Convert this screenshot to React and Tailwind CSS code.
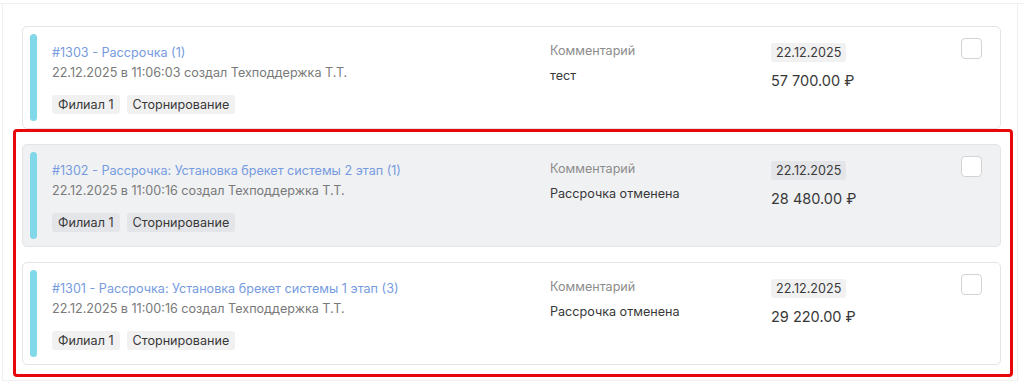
import React from 'react';

const rows = [
  {
    id: 1303,
    title: 'Рассрочка (1)',
    created: '22.12.2025 в 11:06:03 создал Техподдержка Т.Т.',
    comment: 'тест',
    date: '22.12.2025',
    amount: '57 700.00 ₽',
    active: false,
  },
  {
    id: 1302,
    title: 'Рассрочка: Установка брекет системы 2 этап (1)',
    created: '22.12.2025 в 11:00:16 создал Техподдержка Т.Т.',
    comment: 'Рассрочка отменена',
    date: '22.12.2025',
    amount: '28 480.00 ₽',
    active: true,
  },
  {
    id: 1301,
    title: 'Рассрочка: Установка брекет системы 1 этап (3)',
    created: '22.12.2025 в 11:00:16 создал Техподдержка Т.Т.',
    comment: 'Рассрочка отменена',
    date: '22.12.2025',
    amount: '29 220.00 ₽',
    active: false,
  },
];

const PaymentCard = ({ row }) => {
  const chip = row.active ? 'bg-[#e4e5e8]' : 'bg-[#f1f1f2]';
  return (
    <div
      className={`flex h-[103px] p-[7px] rounded-[5px] border ${
        row.active ? 'bg-[#f0f1f3] border-[#e3e4e6]' : 'bg-white border-[#e4e4e6]'
      }`}
    >
      {/* status strip */}
      <div className="w-[7px] shrink-0 rounded-full bg-[#80d8e8]" />

      <div className="flex-1 min-w-0 ml-[15px] pt-[9px]">
        <div className="text-[12.6px] leading-[19px] text-[#769be0]">
          #{row.id} - {row.title}
        </div>
        <div className="mt-[1px] text-[12.6px] leading-[19px] text-[#797979]">{row.created}</div>
        <div className="flex gap-[7px] mt-[13px]">
          <span className={`h-[19px] px-[6px] rounded-[3px] text-[12.6px] leading-[19px] text-[#383838] ${chip}`}>
            Филиал 1
          </span>
          <span className={`h-[19px] px-[6px] rounded-[3px] text-[12.6px] leading-[19px] text-[#383838] ${chip}`}>
            Сторнирование
          </span>
        </div>
      </div>

      <div className="w-[221px] shrink-0 pt-[7px]">
        <div className="text-[12.6px] leading-[19px] text-[#8c8c8c]">Комментарий</div>
        <div className="mt-[6px] text-[12.6px] leading-[19px] text-[#383838]">{row.comment}</div>
      </div>

      <div className="w-[190px] shrink-0 pt-[9px]">
        <span className={`inline-block h-[19px] px-[5px] rounded-[3px] text-[12.6px] leading-[19px] text-[#3a3a3a] align-top ${chip}`}>
          {row.date}
        </span>
        <div className="mt-[4px] text-[14.5px] leading-[20px] text-[#383838]">{row.amount}</div>
      </div>

      <div className="w-[21px] shrink-0 mr-[11px] pt-[4px]">
        <div className="w-[21px] h-[21px] rounded-[4px] border border-[#d3d3d5] bg-white" />
      </div>
    </div>
  );
};

const App = () => {
  return (
    <div className="w-[1024px] h-[390px] bg-white font-['Inter',sans-serif] overflow-hidden">
      <div className="h-[4px] border-b border-[#f0f0f0]" />
      <div className="ml-[2px] w-[1016px] border-l border-r border-b border-[#f0f0f0] pl-[19px] pr-[16px] pt-[22px] pb-[3px]">
        <PaymentCard row={rows[0]} />

        {/* highlighted group */}
        <div className="-ml-[9px] -mr-[12px] pl-[6px] pr-[9px] pt-[12px] pb-[9px] border-[3px] border-[#e8070b] rounded-[4px] flex flex-col gap-[15px]">
          <PaymentCard row={rows[1]} />
          <PaymentCard row={rows[2]} />
        </div>
      </div>
    </div>
  );
};

export default App;
